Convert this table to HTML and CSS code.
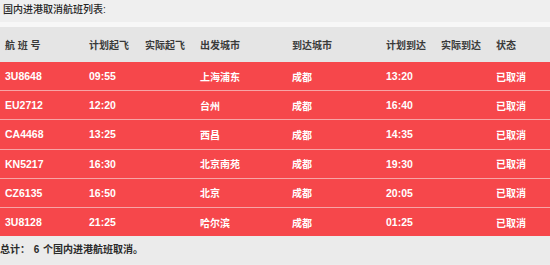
FILE: index.html
```html
<!DOCTYPE html>
<html lang="zh">
<head>
<meta charset="utf-8">
<link rel="stylesheet" href="styles.css">
</head>
<body>
<div class="page">
  <div class="title">国内进港取消航班列表:</div>
  <div class="gap"></div>
  <div class="row head">
    <div>航 班 号</div><div>计划起飞</div><div>实际起飞</div><div>出发城市</div><div>到达城市</div><div>计划到达</div><div>实际到达</div><div>状态</div>
  </div>
  <div class="rows">
    <div class="row data"><div class="lat">3U8648</div><div class="lat">09:55</div><div></div><div>上海浦东</div><div>成都</div><div class="lat">13:20</div><div></div><div>已取消</div></div>
    <div class="row data"><div class="lat">EU2712</div><div class="lat">12:20</div><div></div><div>台州</div><div>成都</div><div class="lat">16:40</div><div></div><div>已取消</div></div>
    <div class="row data"><div class="lat">CA4468</div><div class="lat">13:25</div><div></div><div>西昌</div><div>成都</div><div class="lat">14:35</div><div></div><div>已取消</div></div>
    <div class="row data"><div class="lat">KN5217</div><div class="lat">16:30</div><div></div><div>北京南苑</div><div>成都</div><div class="lat">19:30</div><div></div><div>已取消</div></div>
    <div class="row data"><div class="lat">CZ6135</div><div class="lat">16:50</div><div></div><div>北京</div><div>成都</div><div class="lat">20:05</div><div></div><div>已取消</div></div>
    <div class="row data"><div class="lat">3U8128</div><div class="lat">21:25</div><div></div><div>哈尔滨</div><div>成都</div><div class="lat">01:25</div><div></div><div>已取消</div></div>
  </div>
  <div class="foot">总计： <span class="num">6</span> 个国内进港航班取消。</div>
</div>
</body>
</html>
```
FILE: styles.css
```css
html, body {
  margin: 0;
  padding: 0;
  background: #ececec;
}
.page {
  width: 550px;
  height: 265px;
  overflow: hidden;
  font-family: "Liberation Sans", "Noto Sans CJK SC", sans-serif;
  font-size: 10px;
  color: #333;
}
.title {
  height: 22px;
  line-height: 20px;
  padding-left: 3px;
  background: #efefef;
  color: #262626;
  font-weight: 500;
}
.gap {
  height: 5px;
  background: #f7f7f7;
}
.row {
  display: grid;
  grid-template-columns: 84px 56px 55px 92px 94px 55px 55px 59px;
  align-items: center;
  padding-left: 5px;
}
.head {
  height: 35px;
  background: #e5e5e5;
  color: #3a3a3a;
  font-weight: 600;
}
.rows {
  background: #f7a5a6;
}
.data {
  height: 28.2px;
  background: #f6474b;
  color: #fff;
  font-weight: bold;
  margin-top: 1px;
}
.data:first-child {
  margin-top: 0;
}
.lat {
  font-size: 10.5px;
}
.foot {
  height: 28px;
  line-height: 28px;
  background: #ebebeb;
  color: #2a2a2a;
  font-weight: bold;
}
.num {
  margin: 0 1px;
}
```
